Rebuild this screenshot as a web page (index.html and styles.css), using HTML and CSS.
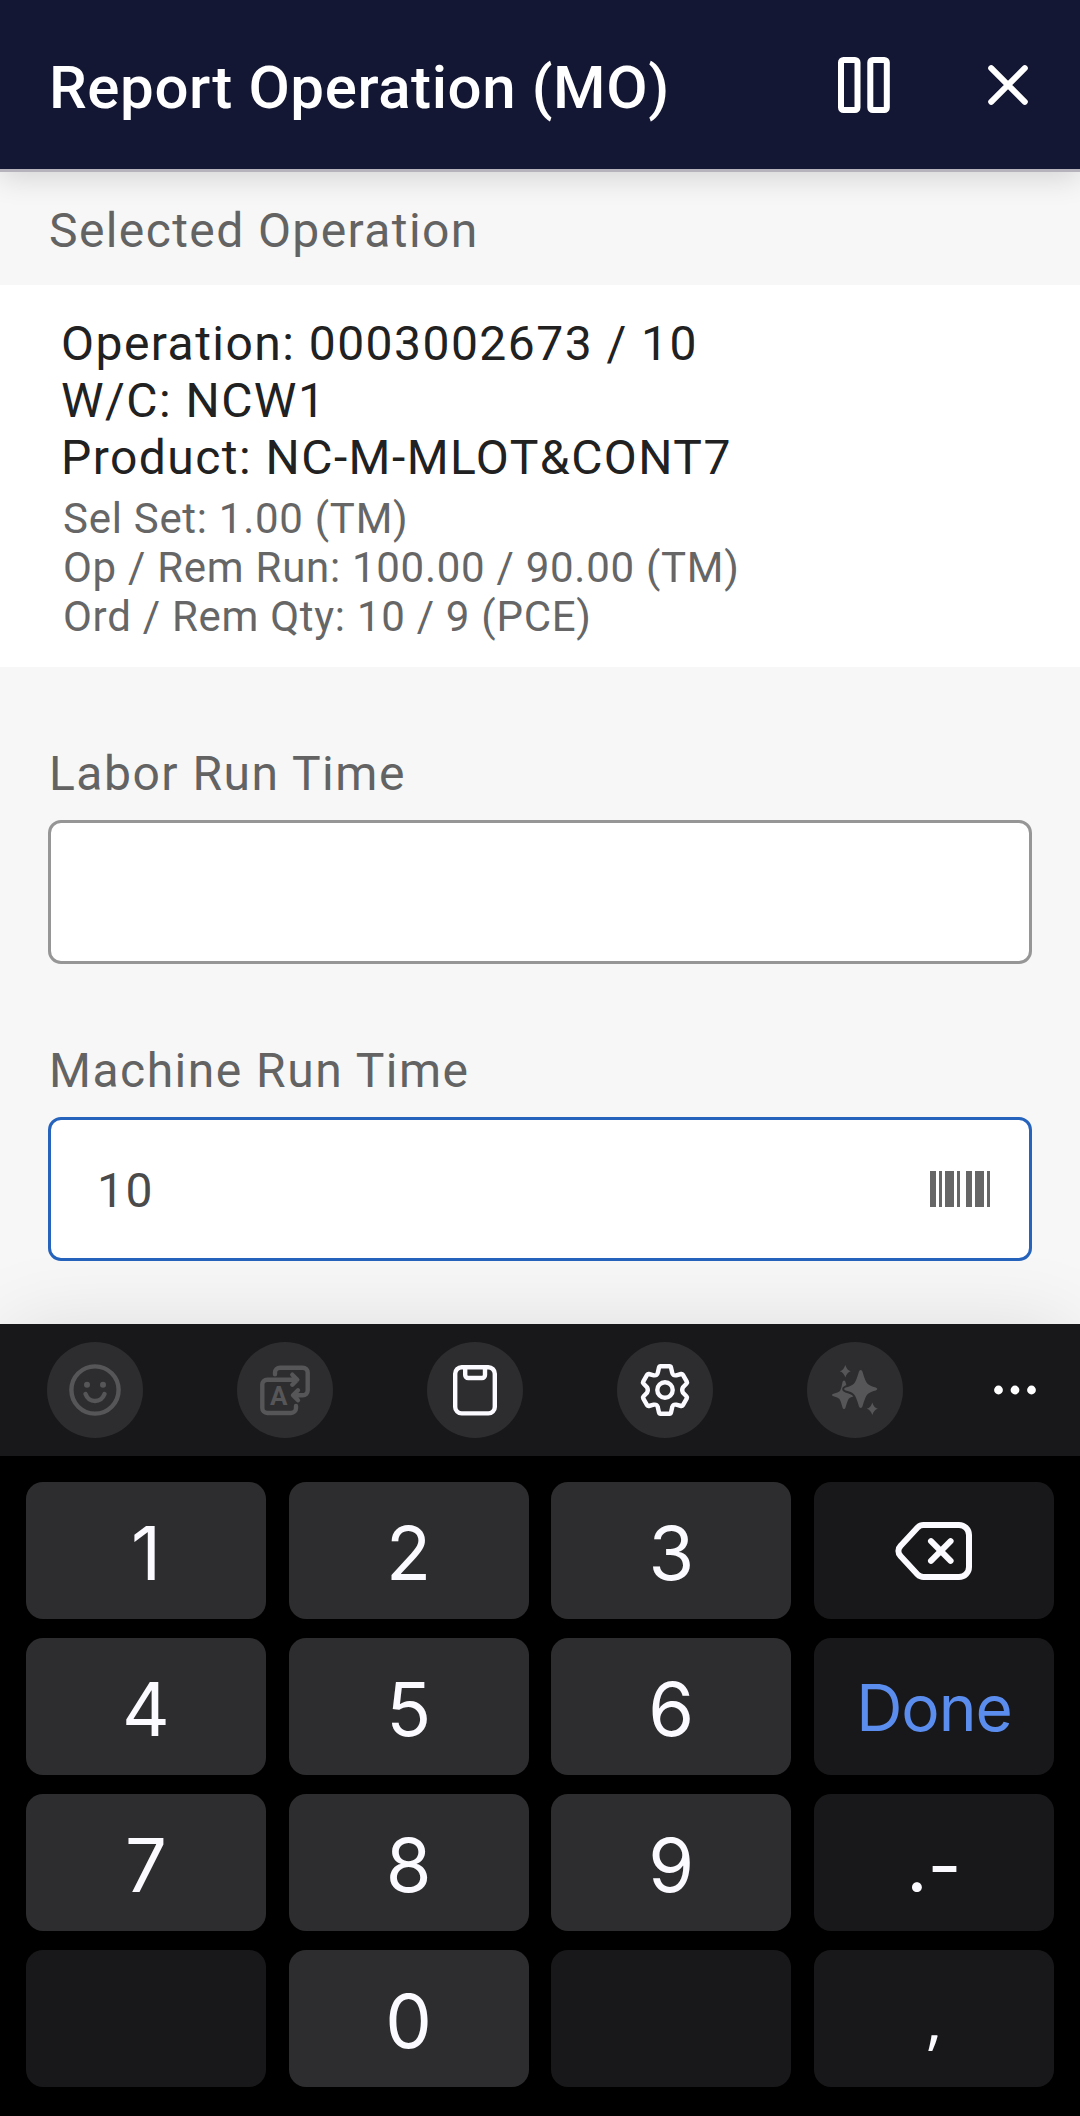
FILE: index.html
```
<!DOCTYPE html>
<html lang="en">
<head>
  <meta charset="UTF-8">
  <meta name="viewport" content="width=device-width, initial-scale=1.0">
  <title>Report Operation (MO)</title>
  <link rel="stylesheet" href="styles.css">
</head>
<body>

  <!-- Header -->
  <header class="app-header">
    <h1>Report Operation (MO)</h1>
    <div class="header-actions">
      <svg class="icon-pause" width="52" height="56" viewBox="0 0 52 56">
        <rect x="3" y="3" width="16.5" height="50" rx="2.5"/>
        <rect x="32.3" y="3" width="16.5" height="50" rx="2.5"/>
      </svg>
      <svg class="icon-close" width="40" height="40" viewBox="0 0 40 40">
        <path d="M3.2 3.2L36.8 36.8M36.8 3.2L3.2 36.8"/>
      </svg>
    </div>
  </header>

  <!-- Form -->
  <main class="content">
    <h2 class="section-title">Selected Operation</h2>

    <div class="operation-card">
      <div class="operation-main">
        <div>Operation: 0003002673 / 10</div>
        <div>W/C: NCW1</div>
        <div>Product: NC-M-MLOT&amp;CONT7</div>
      </div>
      <div class="operation-sub">
        <div>Sel Set: 1.00 (TM)</div>
        <div>Op / Rem Run: 100.00 / 90.00 (TM)</div>
        <div>Ord / Rem Qty: 10 / 9 (PCE)</div>
      </div>
    </div>

    <div class="field">
      <div class="field-label">Labor Run Time</div>
      <div class="field-box"></div>
    </div>

    <div class="field">
      <div class="field-label">Machine Run Time</div>
      <div class="field-box focused">
        <span>10</span>
        <svg class="icon-barcode" width="60" height="36" viewBox="0 0 60 36">
          <path d="M0 0h6v36H0zM9 0h3v36H9zM15 0h9v36h-9zM27 0h3v36h-3zM36 0h6v36h-6zM45 0h9v36h-9zM57 0h3v36h-3z"/>
        </svg>
      </div>
    </div>
  </main>

  <!-- Keyboard -->
  <div class="keyboard">
    <div class="toolbar">
      <div class="tool dim">
        <svg width="60" height="60" viewBox="0 0 60 60">
          <circle cx="30" cy="30" r="23.6"/>
          <path d="M20.5 34c3.6 9.3 15.4 9.3 19 0"/>
          <circle class="fill" cx="22" cy="24.7" r="3"/>
          <circle class="fill" cx="38" cy="24.7" r="3"/>
        </svg>
      </div>
      <div class="tool dim">
        <svg width="60" height="60" viewBox="0 0 60 60">
          <path d="M20 14.3V12.7a5 5 0 0 1 5-5H47.7a5 5 0 0 1 5 5V30.3a5 5 0 0 1-5 5H39M43 30.3l-5 5 5 5"/>
          <path d="M42 19.7H12.3a5 5 0 0 0-5 5V48a5 5 0 0 0 5 5H36a5 5 0 0 0 5-5V46M37.3 14.7l5 5-5 5"/>
          <text x="23.7" y="44.8" text-anchor="middle">A</text>
        </svg>
      </div>
      <div class="tool">
        <svg width="60" height="60" viewBox="0 0 60 60">
          <rect x="10.2" y="7.2" width="39.6" height="46.2" rx="6.5"/>
          <path d="M20.2 7.2V15a3 3 0 0 0 3 3H37a3 3 0 0 0 3-3V7.2"/>
        </svg>
      </div>
      <div class="tool">
        <svg width="60" height="60" viewBox="0 0 60 60">
          <path d="M25.5 6.3h9q1.2 0 1.5 1.2l1.2 5.2q.6 3.3 4 2.6l5-1.3q1-.2 1.6.7l4 7q.6 1-.2 1.8l-3.6 3.7q-1.6 2.8 0 5.6l3.6 3.7q.8.8.2 1.8l-4 7q-.6.9-1.6.7l-5-1.3q-3.4-.7-4 2.6l-1.2 5.2q-.3 1.2-1.5 1.2h-9q-1.2 0-1.5-1.2l-1.2-5.2q-.6-3.3-4-2.6l-5 1.3q-1 .2-1.6-.7l-4-7q-.6-1 .2-1.8l3.6-3.7q1.6-2.8 0-5.6l-3.6-3.7q-.8-.8-.2-1.8l4-7q.6-.9 1.6-.7l5 1.3q3.4.7 4-2.6l1.2-5.2q.3-1.2 1.5-1.2z"/>
          <circle cx="30" cy="30" r="7.7"/>
        </svg>
      </div>
      <div class="tool dim">
        <svg width="60" height="60" viewBox="0 0 60 60">
          <path class="fill" d="M19 20.5q1.2 0 1.5 1.5 2 8 3.5 9.5t6 2.2q1.5.5 1.5 1.3t-1.5 1.3q-5 1-6.2 2.4t-3.3 8.8q-.3 1.5-1.5 1.5t-1.5-1.500q-2-7.500-3.300-8.800T8.500 36.300Q7 35.800 7 35t1.500-1.300q4.800-1 6.200-2.400t2.800-9.300q.3-1.500 1.500-1.500z"/>
          <path class="star" d="M35.700 10q1.300 0 1.800 1.800 2.700 9.700 5 12t8.200 3.700q1.600.6 1.600 1.500t-1.600 1.500q-6 1.500-8.200 3.700t-5 12q-.5 1.800-1.800 1.800t-1.800-1.800q-2.700-9.700-5-12t-8.200-3.700q-1.600-.6-1.600-1.500t1.600-1.500q6-1.500 8.200-3.700t5-12q.5-1.800 1.800-1.800z"/>
          <path class="fill" d="M20.300 5q1.500 5.200 5.500 6.300-4 1.200-5.500 6.300-1.500-5.100-5.500-6.300 4-1.100 5.500-6.300zM47.300 42.400q1.500 5.200 5.500 6.300-4 1.200-5.500 6.300-1.500-5.100-5.500-6.300 4-1.100 5.500-6.300z"/>
        </svg>
      </div>
      <svg class="icon-more" width="44" height="10" viewBox="0 0 44 10">
        <circle cx="5.5" cy="5" r="4.4"/>
        <circle cx="22" cy="5" r="4.4"/>
        <circle cx="38.5" cy="5" r="4.4"/>
      </svg>
    </div>

    <div class="keys">
      <div class="key">1</div>
      <div class="key">2</div>
      <div class="key">3</div>
      <div class="key dark delete">
        <svg class="icon-backspace" width="78" height="60" viewBox="0 0 78 60">
          <path d="M28.5 4H64a10 10 0 0 1 10 10V46a10 10 0 0 1-10 10H28.5a8 8 0 0 1-5.7-2.3L5.5 35a7 7 0 0 1 0-10L22.8 6.3A8 8 0 0 1 28.5 4z"/>
          <path d="M36 20.200l19.600 19.600M55.600 20.200L36 39.800"/>
        </svg>
      </div>
      <div class="key">4</div>
      <div class="key">5</div>
      <div class="key">6</div>
      <div class="key dark done">Done</div>
      <div class="key">7</div>
      <div class="key">8</div>
      <div class="key">9</div>
      <div class="key dark">.-</div>
      <div class="key dark"></div>
      <div class="key">0</div>
      <div class="key dark"></div>
      <div class="key dark comma">,</div>
    </div>
  </div>

</body>
</html>
```

FILE: styles.css
```
/* ===== General Styles ===== */
* {
  box-sizing: border-box;
}

body {
  font-family: Roboto, sans-serif;
  margin: 0;
  width: 1080px;
  height: 2116px;
  background-color: #f7f7f7;
  display: flex;
  flex-direction: column;
  overflow: hidden;
}

svg {
  display: block;
}

/* ===== Header ===== */
.app-header {
  position: relative;
  height: 172px;
  padding: 5px 52px 0 49px;
  display: flex;
  justify-content: space-between;
  align-items: center;
  background-color: #141733;
  border-bottom: 3px solid #b7b3bc;
  box-shadow: 0 6px 28px rgba(0, 0, 0, 0.14);
}

.app-header h1 {
  margin: 0;
  font-size: 60px;
  font-weight: 500;
  letter-spacing: 0.6px;
  color: #fff;
}

.header-actions {
  display: flex;
  align-items: center;
  gap: 98px;
  margin-bottom: 4px;
}

.icon-pause,
.icon-close {
  fill: none;
  stroke: #fff;
  stroke-width: 6;
  stroke-linecap: round;
}

/* ===== Content ===== */
.content {
  height: 1152px;
}

.section-title {
  margin: 0;
  padding: 30px 49px 26px;
  font-size: 48px;
  line-height: 57px;
  font-weight: 400;
  letter-spacing: 1.4px;
  color: #636363;
}

.operation-card {
  height: 382px;
  padding: 30px 61px 0;
  background-color: #fff;
}

.operation-main {
  font-size: 48px;
  line-height: 57px;
  letter-spacing: 1.46px;
  color: #212121;
}

.operation-sub {
  margin-top: 8px;
  padding-left: 2px;
  font-size: 42px;
  line-height: 49px;
  letter-spacing: 0.72px;
  color: #666;
}

.field {
  padding: 78px 48px 0;
}

.field-label {
  padding-left: 1px;
  font-size: 48px;
  line-height: 57px;
  letter-spacing: 1.5px;
  color: #636363;
}

.field-box {
  height: 144px;
  margin-top: 18px;
  padding: 3px 39px 0 46px;
  display: flex;
  justify-content: space-between;
  align-items: center;
  background-color: #fff;
  border: 3px solid #969696;
  border-radius: 13px;
  font-size: 48px;
  letter-spacing: 1.5px;
  color: #4a4a4a;
}

.field-box.focused {
  border-color: #2563bd;
}

.icon-barcode {
  fill: #666;
  margin-bottom: 3px;
}

/* ===== Keyboard ===== */
.keyboard {
  position: relative;
  height: 792px;
  background-color: #000;
  box-shadow: 0 -4px 80px -10px rgba(0, 0, 0, 0.12);
}

.toolbar {
  height: 132px;
  padding-left: 47px;
  display: flex;
  align-items: center;
  gap: 94px;
  background-color: #18181a;
}

.tool {
  width: 96px;
  height: 96px;
  display: flex;
  justify-content: center;
  align-items: center;
  border-radius: 50%;
  background-color: #2d2d2f;
  color: #fafaff;
}

.tool.dim {
  color: #565658;
}

.tool svg {
  fill: none;
  stroke: currentColor;
  stroke-width: 4.4;
  stroke-linecap: round;
  stroke-linejoin: round;
}

.tool .fill {
  fill: currentColor;
  stroke: none;
}

.tool .star {
  fill: currentColor;
  stroke: #2d2d2f;
  stroke-width: 4;
  paint-order: stroke;
}

.tool text {
  font-size: 26px;
  font-weight: 700;
  fill: currentColor;
  stroke: none;
}

.icon-more {
  margin-left: -4px;
  fill: #fff;
}

.keys {
  padding: 26px;
  display: grid;
  grid-template-columns: repeat(4, 240px);
  grid-auto-rows: 137px;
  justify-content: space-between;
  row-gap: 19px;
}

.key {
  display: flex;
  justify-content: center;
  align-items: center;
  padding-top: 5px;
  border-radius: 17px;
  background-color: #2d2d2f;
  font-family: Inter, sans-serif;
  font-size: 74px;
  line-height: 1;
  color: #fafaff;
}

.key.dark {
  background-color: #18181a;
}

.key.delete {
  padding-top: 0;
}

.key.done {
  padding-top: 2px;
  font-size: 64px;
  letter-spacing: -1px;
  color: #5b8def;
}

.key.comma {
  padding-top: 0;
  font-family: "Open Sans", sans-serif;
  font-size: 64px;
}

.icon-backspace {
  fill: none;
  stroke: currentColor;
  stroke-width: 6;
  stroke-linecap: round;
  stroke-linejoin: round;
}
```
